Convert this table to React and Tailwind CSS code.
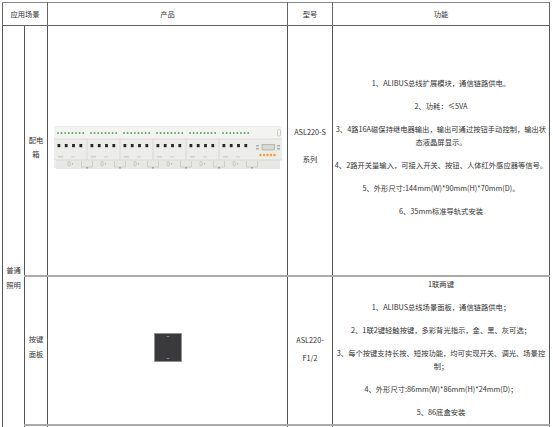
import React from "react";

const DinRail = () => {
  const mods = [0, 1, 2, 3, 4, 5];
  return (
    <svg width="228" height="43" viewBox="0 0 228 43" className="mx-auto block">
      <rect x="2" y="34" width="224" height="9" fill="#e7e7e5" />
      <rect x="0" y="12" width="228" height="22" fill="#ececea" />
      <rect x="1" y="0" width="226" height="13" rx="1.5" fill="#f3f3f1" stroke="#dededc" strokeWidth="0.5" />
      <line x1="0" y1="13" x2="228" y2="13" stroke="#d6d6d4" strokeWidth="0.6" />
      <line x1="0" y1="34" x2="228" y2="34" stroke="#d0d0ce" strokeWidth="0.6" />
      {mods.map((k) => (
        <g key={k}>
          {k > 0 && <line x1={33 * k} y1="13" x2={33 * k} y2="34" stroke="#cfcfcd" strokeWidth="0.6" />}
          {[0, 1, 2, 3, 4, 5, 6, 7].map((i) => (
            <circle key={i} cx={4 + 33 * k + i * 3.6} cy="7" r="0.95" fill="#5f9f62" />
          ))}
          {[0, 1, 2, 3].map((i) => (
            <rect key={i} x={3.5 + 33 * k + i * 7.3} y="18" width="2.8" height="3.2" fill="#262626" />
          ))}
          <rect x={4 + 33 * k} y="30.5" width="5" height="0.8" fill="#b5b5b5" />
          <rect x={17 + 33 * k} y="30.5" width="4" height="0.8" fill="#c5c5c5" />
          <rect x={14 + 33 * k} y="35.5" width="2.2" height="4.5" rx="1" fill="none" stroke="#a9a9a9" strokeWidth="0.5" />
          <circle cx={18.5 + 33 * k} cy="37.8" r="0.6" fill="#999" />
          <path d={`M${27.5 + 33 * k} 35 v6 h11 v-6`} fill="none" stroke="#bdbdbd" strokeWidth="0.6" />
          <rect x={32 + 33 * k} y="41.5" width="2" height="0.8" fill="#777" />
        </g>
      ))}
      <path d="M1 35 v7" stroke="#bdbdbd" strokeWidth="0.6" />
      <rect x="202" y="19.5" width="3" height="0.7" fill="#666" />
      <rect x="202" y="22.5" width="3" height="0.7" fill="#666" />
      <rect x="208" y="18.5" width="12.5" height="5.5" fill="#d8dccf" stroke="#8c8c8c" strokeWidth="0.5" />
      <rect x="223" y="19.5" width="3" height="0.7" fill="#666" />
      <rect x="223" y="22.5" width="3" height="0.7" fill="#666" />
      {[0, 1, 2, 3, 4].map((i) => (
        <circle key={i} cx={206.5 + i * 3.5} cy="29" r="1.25" fill="#f4a23c" />
      ))}
      <rect x="223.5" y="3.5" width="3" height="6.5" rx="1" fill="none" stroke="#b8b8b8" strokeWidth="0.6" />
    </svg>
  );
};

const Panel = () => (
  <svg width="28" height="29" viewBox="0 0 28 29" className="mx-auto block">
    <rect x="0.5" y="0.5" width="27" height="28" fill="#3a3a3d" stroke="#8d8d8f" strokeWidth="0.8" />
    <rect x="12.5" y="3" width="3" height="0.8" rx="0.4" fill="#9a9a9c" />
    <rect x="12.5" y="25" width="3" height="0.8" rx="0.4" fill="#9a9a9c" />
  </svg>
);

export default function App() {
  return (
    <div className="min-h-screen bg-white">
      <table className="ml-[2px] mt-[2px] w-[547px] table-fixed border-collapse text-[7.3px] text-[#333] font-['Noto_Sans_CJK_SC','Liberation_Sans',sans-serif]">
        <colgroup>
          <col className="w-[22px]" />
          <col className="w-[23px]" />
          <col className="w-[240px]" />
          <col className="w-[45px]" />
          <col className="w-[217px]" />
        </colgroup>
        <tbody>
          <tr className="h-[23px]">
            <td colSpan={2} className="border border-[#666] border-t-[#888] text-center align-middle">应用场景</td>
            <td className="border border-[#666] border-t-[#888] text-center align-middle">产品</td>
            <td className="border border-[#666] border-t-[#888] text-center align-middle">型号</td>
            <td className="border border-[#666] border-t-[#888] text-center align-middle">功能</td>
          </tr>
          <tr className="h-[250px]">
            <td rowSpan={3} className="border border-[#555] text-center align-middle leading-[15px]">
              普通<br />照明
            </td>
            <td className="border border-[#555] border-b-2 border-b-[#aaa] pb-[6px] text-center align-middle leading-[14px]">
              配电<br />箱
            </td>
            <td className="border border-[#555] border-b-2 border-b-[#aaa] pb-[5px] align-middle">
              <DinRail />
            </td>
            <td className="border border-[#555] border-b-2 border-b-[#aaa] pb-[8px] text-center align-middle">
              <div className="flex flex-col gap-[14px] leading-[13px]">
                <span>ASL220-S</span>
                <span>系列</span>
              </div>
            </td>
            <td className="border border-[#555] border-b-2 border-b-[#aaa] p-0 pb-[6px] text-center align-middle">
              <div className="flex flex-col gap-[10px] leading-[13px] whitespace-nowrap">
                <p>1、ALIBUS总线扩展模块，通信链路供电。</p>
                <p>2、功耗：≤5VA</p>
                <p>
                  3、4路16A磁保持继电器输出，输出可通过按钮手动控制，输出状<br />态液晶屏显示。
                </p>
                <p>4、2路开关量输入，可接入开关、按钮、人体红外感应器等信号。</p>
                <p>5、外形尺寸:144mm(W)*90mm(H)*70mm(D)。</p>
                <p>6、35mm标准导轨式安装</p>
              </div>
            </td>
          </tr>
          <tr className="h-[149px]">
            <td className="border border-[#555] border-b-2 border-b-[#aaa] pb-[6px] text-center align-middle leading-[15px]">
              按键<br />面板
            </td>
            <td className="border border-[#555] border-b-2 border-b-[#aaa] pb-[6px] align-middle">
              <Panel />
            </td>
            <td className="border border-[#555] border-b-2 border-b-[#aaa] pb-[3px] text-center align-middle leading-[18px]">
              ASL220-<br />F1/2
            </td>
            <td className="border border-[#555] border-b-2 border-b-[#aaa] p-0 pb-[4px] text-center align-middle">
              <div className="flex flex-col gap-[10px] leading-[13px] whitespace-nowrap">
                <p>1联两键</p>
                <p>1、ALIBUS总线场景面板，通信链路供电；</p>
                <p>2、1联2键轻触按键，多彩背光指示，金、黑、灰可选；</p>
                <p>
                  3、每个按键支持长按、短按功能，均可实现开关、调光、场景控<br />制；
                </p>
                <p>4、外形尺寸:86mm(W)*86mm(H)*24mm(D)；</p>
                <p>5、86底盒安装</p>
              </div>
            </td>
          </tr>
          <tr className="h-[106px]">
            <td className="border border-[#555]"></td>
            <td className="border border-[#555]"></td>
            <td className="border border-[#555]"></td>
            <td className="border border-[#555]"></td>
          </tr>
        </tbody>
      </table>
    </div>
  );
}
